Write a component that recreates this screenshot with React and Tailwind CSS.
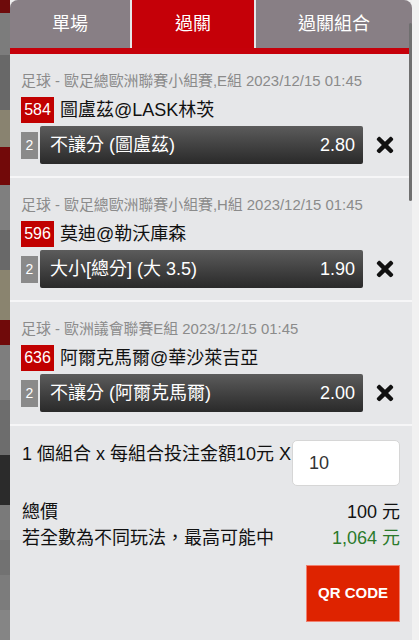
import { FaTimes } from 'react-icons/fa';

const FONT = { fontFamily: '"Liberation Sans", "Noto Sans CJK TC", sans-serif' };

const bets = [
  {
    meta: '足球 - 歐足總歐洲聯賽小組賽,E組 2023/12/15 01:45',
    no: '584',
    match: '圖盧茲@LASK林茨',
    pick: '不讓分 (圖盧茲)',
    odds: '2.80',
  },
  {
    meta: '足球 - 歐足總歐洲聯賽小組賽,H組 2023/12/15 01:45',
    no: '596',
    match: '莫迪@勒沃庫森',
    pick: '大小[總分] (大 3.5)',
    odds: '1.90',
  },
  {
    meta: '足球 - 歐洲議會聯賽E組 2023/12/15 01:45',
    no: '636',
    match: '阿爾克馬爾@華沙萊吉亞',
    pick: '不讓分 (阿爾克馬爾)',
    odds: '2.00',
  },
];

// dimmed page peeking out on the left of the sheet
const strip = [
  ['h-[13px]', 'bg-[#6e0b0b]'],
  ['h-[42px]', 'bg-[#7c7c7c]'],
  ['h-[55px]', 'bg-[#686868]'],
  ['h-[37px]', 'bg-[#898370]'],
  ['h-[38px]', 'bg-[#720909]'],
  ['h-[45px]', 'bg-[#7f7f7f]'],
  ['h-[40px]', 'bg-[#696969]'],
  ['h-[50px]', 'bg-[#8a846f]'],
  ['h-[25px]', 'bg-[#700a0a]'],
  ['h-[55px]', 'bg-[#7e7e7e]'],
  ['h-[55px]', 'bg-[#6d6d6d]'],
  ['h-[50px]', 'bg-[#2b2b2b]'],
  ['h-[35px]', 'bg-[#7a7a7a]'],
  ['h-[35px]', 'bg-[#727272]'],
  ['h-[35px]', 'bg-[#7c7c7c]'],
  ['h-[30px]', 'bg-[#858585]'],
];

function BetItem({ bet }) {
  return (
    <div className="border-b-2 border-[#f6f6f7] pl-[11px] pt-[17px] pb-[12px]">
      <div className="h-[20px] text-[14.9px] leading-[20px] text-[#8b8b8b] whitespace-nowrap">{bet.meta}</div>
      <div className="mt-[6px] flex items-center gap-[6px]">
        <div className="flex h-[26px] w-[33px] items-center justify-center bg-[#c10000] text-[16px] text-white">
          {bet.no}
        </div>
        <div className="text-[18px] leading-[26px] text-[#111]">{bet.match}</div>
      </div>
      <div className="mt-[3px] flex items-center">
        <div className="flex h-[27px] w-[17px] items-center justify-center bg-[#8a8a8a] text-[14px] text-white">2</div>
        <div className="ml-[2px] flex h-[38px] w-[323px] items-center justify-between rounded-[2px] bg-gradient-to-b from-[#5c5c5c] to-[#2a2a2a] pl-[10px] pr-[8px] text-[18px] text-white">
          <span>{bet.pick}</span>
          <span>{bet.odds}</span>
        </div>
        <FaTimes className="ml-[10px] text-[#111]" size={24} />
      </div>
    </div>
  );
}

export default function App() {
  return (
    <div className="flex h-[640px] w-[419px] overflow-hidden bg-[#efefef]" style={FONT}>
      <div className="flex w-[10px] shrink-0 flex-col">
        {strip.map(([h, c], i) => (
          <div key={i} className={`${h} ${c}`} />
        ))}
      </div>

      <div className="relative flex w-[402px] shrink-0 flex-col overflow-hidden rounded-t-[8px] bg-[#e6e7e9]">
        <div className="flex h-[48px] text-[18px] text-white">
          <div className="flex w-[120px] items-center justify-center bg-[#887f85]">單場</div>
          <div className="ml-[2px] flex w-[122px] items-center justify-center bg-[#c50008]">過關</div>
          <div className="ml-[2px] flex flex-1 items-center justify-center bg-[#887f85]">過關組合</div>
        </div>
        <div className="h-[6px] bg-[#c6000a]" />

        {bets.map((b) => (
          <BetItem key={b.no} bet={b} />
        ))}

        <div className="px-[12px] pt-[14px]">
          <div className="flex items-start justify-between">
            <div className="mt-[4px] text-[18px] leading-[20px] text-[#111] whitespace-nowrap">
              1 個組合 x 每組合投注金額10元 X
            </div>
            <div className="flex h-[46px] w-[108px] items-center rounded-[5px] border border-[#d6d6d6] bg-white pl-[16px] text-[18px] text-[#333]">
              10
            </div>
          </div>
          <div className="mt-[13px] flex justify-between text-[18px] leading-[26px] text-[#111]">
            <span>總價</span>
            <span>100 元</span>
          </div>
          <div className="flex justify-between text-[18px] leading-[26px] text-[#111]">
            <span>若全數為不同玩法，最高可能中</span>
            <span className="text-[#2b7a2b]">1,064 元</span>
          </div>
          <div className="mt-[14px] flex justify-end">
            <button className="h-[57px] w-[94px] border border-[#f08070] bg-[#de2300] text-[15px] font-bold text-white">
              QR CODE
            </button>
          </div>
        </div>

        <div className="absolute right-0 top-[23px] h-[178px] w-[3px] rounded-full bg-[#6f6f6f]" />
      </div>

      <div className="flex-1 bg-[#f1f1f1]" />
    </div>
  );
}
